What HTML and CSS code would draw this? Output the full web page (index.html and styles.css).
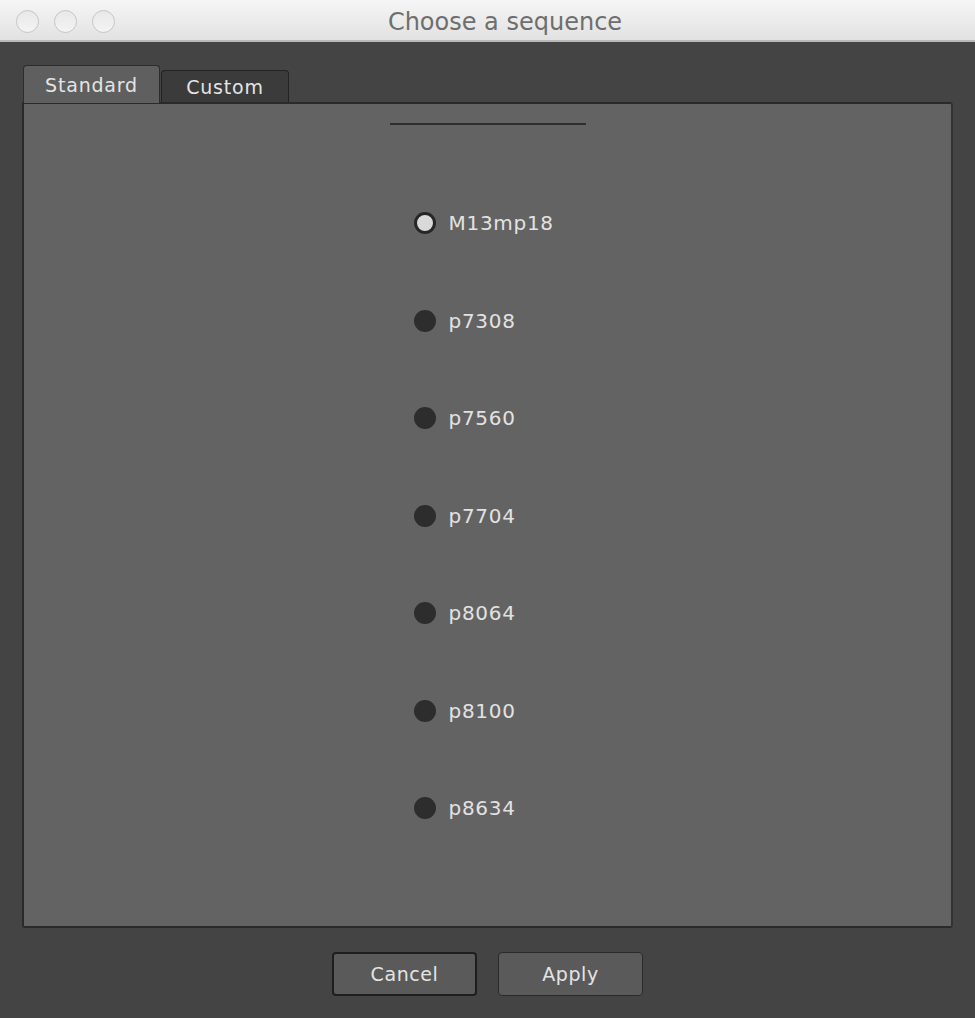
FILE: index.html
```html
<!DOCTYPE html>
<html lang="en">
<head>
  <meta charset="UTF-8" />
  <title>Choose a sequence</title>
  <link rel="stylesheet" href="styles.css">
</head>
<body>
  <div class="window">
    <div class="titlebar">
      <div class="lights">
        <span class="light"></span>
        <span class="light"></span>
        <span class="light"></span>
      </div>
      <div class="title">Choose a sequence</div>
    </div>

    <div class="content">
      <div class="tabs">
        <div class="tab active">Standard</div>
        <div class="tab">Custom</div>
      </div>

      <div class="panel">
        <div class="rule"></div>
        <div class="options">
          <label class="option"><span class="radio checked"></span>M13mp18</label>
          <label class="option"><span class="radio"></span>p7308</label>
          <label class="option"><span class="radio"></span>p7560</label>
          <label class="option"><span class="radio"></span>p7704</label>
          <label class="option"><span class="radio"></span>p8064</label>
          <label class="option"><span class="radio"></span>p8100</label>
          <label class="option"><span class="radio"></span>p8634</label>
        </div>
      </div>

      <div class="actions">
        <button class="btn cancel">Cancel</button>
        <button class="btn">Apply</button>
      </div>
    </div>
  </div>
</body>
</html>
```

FILE: styles.css
```css
* {
  box-sizing: border-box;
}
body {
  margin: 0;
  padding: 0;
  background: #444;
  font-family: 'DejaVu Sans', 'Liberation Sans', sans-serif;
}
.window {
  width: 975px;
  height: 1018px;
  background: #444444;
  display: flex;
  flex-direction: column;
}
.titlebar {
  height: 42px;
  background: linear-gradient(to bottom, #f6f6f6, #e2e2e2);
  border-bottom: 2px solid #b9b9b9;
  display: flex;
  align-items: center;
  position: relative;
}
.lights {
  display: flex;
  gap: 15px;
  padding-left: 16px;
  padding-top: 2px;
}
.light {
  width: 23px;
  height: 23px;
  border-radius: 50%;
  border: 1.5px solid #c6c6c6;
  background: linear-gradient(to bottom, #e8e8e8, #f4f4f4);
}
.title {
  position: absolute;
  left: 0;
  right: 0;
  top: 8px;
  text-align: center;
  padding-left: 35px;
  font-size: 24px;
  color: #6e6e6e;
}
.content {
  flex: 1;
  padding: 23px 22px 0 22px;
  display: flex;
  flex-direction: column;
}
.tabs {
  display: flex;
  align-items: flex-end;
  padding-left: 1px;
}
.tab {
  height: 32px;
  width: 128px;
  background: #3b3b3b;
  border: 1.5px solid #232323;
  border-bottom: none;
  border-radius: 4px 4px 0 0;
  color: #e4e4e4;
  font-size: 19px;
  letter-spacing: 0.8px;
  text-align: center;
  padding-top: 5px;
  margin-left: 1px;
}
.tab.active {
  height: 38px;
  width: 137px;
  background: #5f5f5f;
  border-color: #2c2c2c;
  padding-top: 8px;
  margin-left: 0;
  margin-bottom: -1px;
  position: relative;
  z-index: 1;
}
.panel {
  height: 826px;
  width: 931px;
  background: #636363;
  border: 2px solid #2a2a2a;
  border-right-color: #333;
  border-radius: 0 3px 3px 3px;
  display: flex;
  flex-direction: column;
  align-items: center;
}
.rule {
  width: 196px;
  height: 2px;
  background: #2e2e2e;
  margin-top: 19px;
  margin-left: 0;
}
.options {
  display: flex;
  flex-direction: column;
  gap: 73.5px;
  margin-top: 86px;
  margin-left: 12px;
  width: 160px;
}
.option {
  height: 24px;
  display: flex;
  align-items: center;
  gap: 13px;
  color: #e2e2e2;
  font-size: 20px;
  letter-spacing: 0.7px;
}
.radio {
  width: 22px;
  height: 22px;
  border-radius: 50%;
  background: #2d2d2d;
  flex-shrink: 0;
}
.radio.checked {
  background: #d9d9d9;
  border: 3px solid #262626;
}
.actions {
  display: flex;
  justify-content: center;
  gap: 21px;
  margin-top: 24px;
}
.btn {
  width: 145px;
  height: 44px;
  background: #5a5a5a;
  border: 1.5px solid #2a2a2a;
  border-radius: 4px;
  color: #e4e4e4;
  font-family: 'DejaVu Sans', 'Liberation Sans', sans-serif;
  font-size: 19px;
  letter-spacing: 0.6px;
}
.btn.cancel {
  border: 2px solid #1e1e1e;
}
```
